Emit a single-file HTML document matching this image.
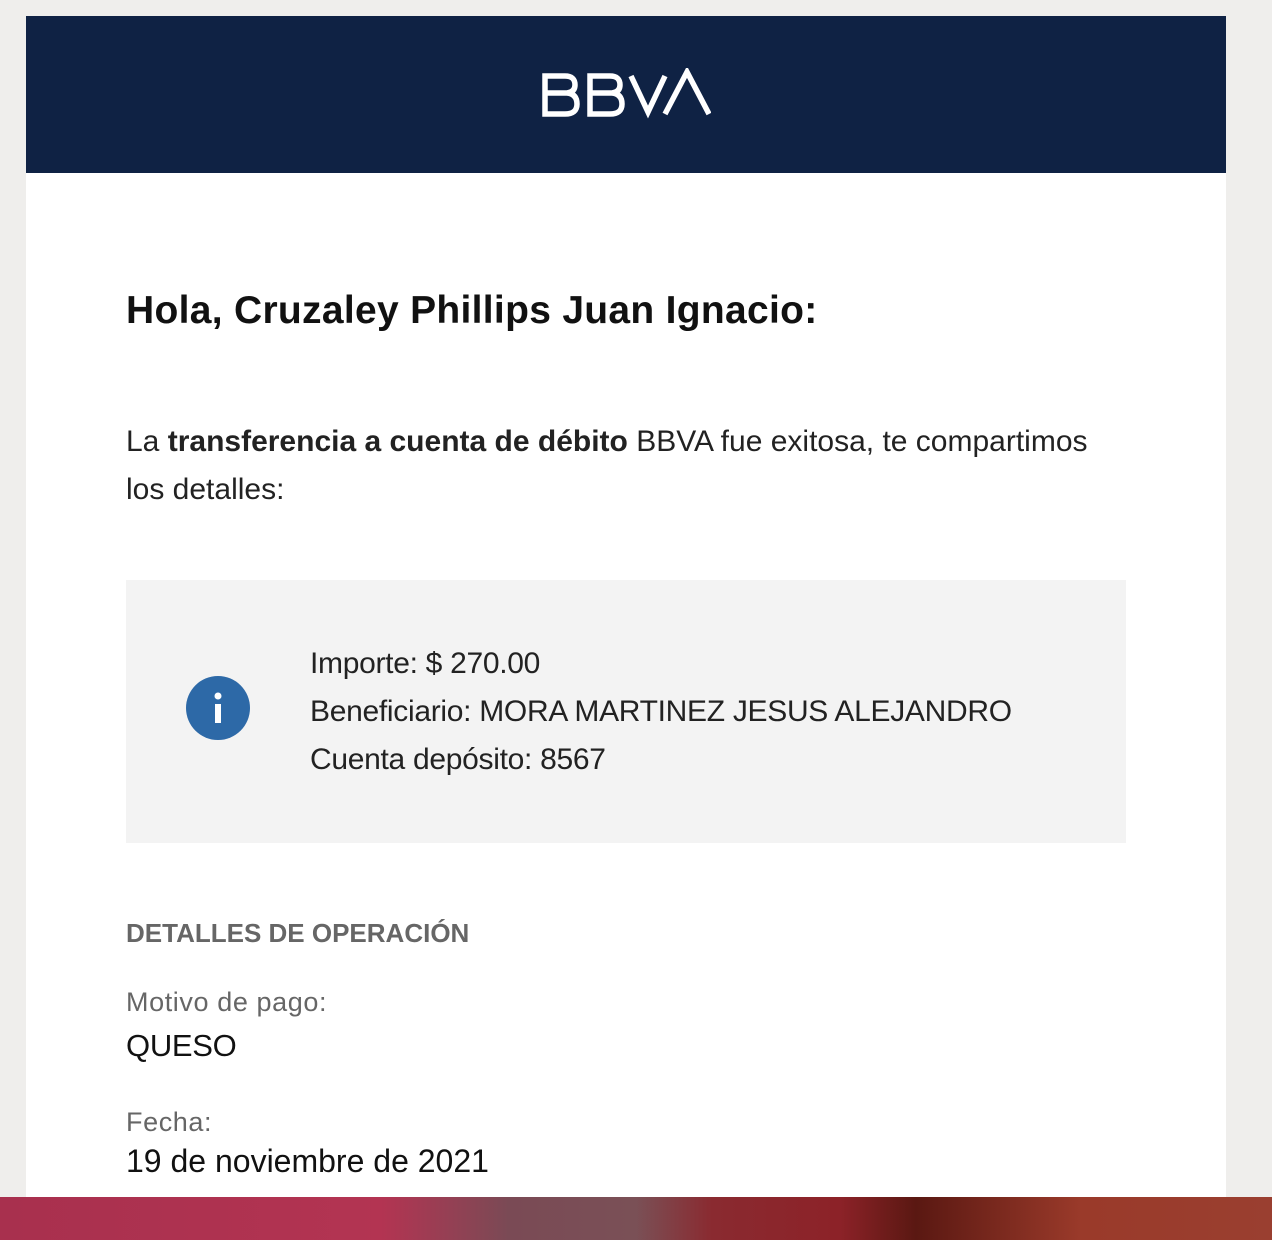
<!DOCTYPE html><html><head><style>
body{margin:0;width:1272px;height:1240px;background:#efeeec;font-family:"Liberation Sans",sans-serif;overflow:hidden;position:relative}
.card{position:absolute;left:26px;top:16px;width:1200px;height:1200px;background:#fff}
.hdr{height:157px;background:#0f2244;position:relative}
.logo{position:absolute;left:515px;top:52px}
h1{position:absolute;left:100px;top:273px;margin:0;font-size:39px;font-weight:bold;color:#111;letter-spacing:0.3px}
.p{position:absolute;left:100px;top:402px;width:1000px;font-size:30px;line-height:48px;color:#222;letter-spacing:0}
.box{position:absolute;left:100px;top:564px;width:1000px;height:263px;background:#f3f3f3}
.ico{position:absolute;left:60px;top:96px;width:64px;height:64px;border-radius:50%;background:#2d69a7}
.bt{position:absolute;left:184px;top:60px;font-size:30px;line-height:48px;color:#222;letter-spacing:-0.3px}
.s{position:absolute;left:100px;font-size:27px;color:#666;letter-spacing:0.6px}
.v{position:absolute;left:100px;font-size:31px;color:#111;letter-spacing:-0.3px}
.strip{position:absolute;left:0;top:1197px;width:1272px;height:43px;background:linear-gradient(90deg,#a8304e 0%,#b33452 30%,#7a4a55 40%,#7a5056 50%,#8a2a30 56%,#8c2228 66%,#5a1812 72%,#9a3a2a 85%,#9a3f30 100%)}
</style></head><body>
<div class="card">
<div class="hdr"><svg class="logo" width="170" height="52" viewBox="0 0 170 52">
<g fill="none" stroke="#fff" stroke-width="5.5">
<path d="M4 8H24Q34 8 34 17Q34 24 26 25Q36 26 36 36Q36 46 24 46H4Z M4 25H26"/>
<path d="M49 8H69Q79 8 79 17Q79 24 71 25Q81 26 81 36Q81 46 69 46H49Z M49 25H71"/>
<path d="M90 8L107 44L124 8"/>
<path d="M124 46L146 4L168 46"/>
</g></svg></div>
<h1>Hola, Cruzaley Phillips Juan Ignacio:</h1>
<div class="p">La <b>transferencia a cuenta de débito</b> BBVA fue exitosa, te compartimos los detalles:</div>
<div class="box"><div class="ico"><svg width="64" height="64"><circle cx="32" cy="20" r="3.5" fill="#fff"/><rect x="29" y="28" width="6" height="19" fill="#fff"/></svg></div>
<div class="bt">Importe: $ 270.00<br>Beneficiario: MORA MARTINEZ JESUS ALEJANDRO<br>Cuenta depósito: 8567</div></div>
<div class="s" style="top:902px;font-weight:bold;font-size:26px;letter-spacing:0">DETALLES DE OPERACIÓN</div>
<div class="s" style="top:971px">Motivo de pago:</div>
<div class="v" style="top:1012px">QUESO</div>
<div class="s" style="top:1091px">Fecha:</div>
<div class="v" style="top:1127px;font-size:32px;letter-spacing:0">19 de noviembre de 2021</div>
</div>
<div class="strip"></div>
</body></html>
